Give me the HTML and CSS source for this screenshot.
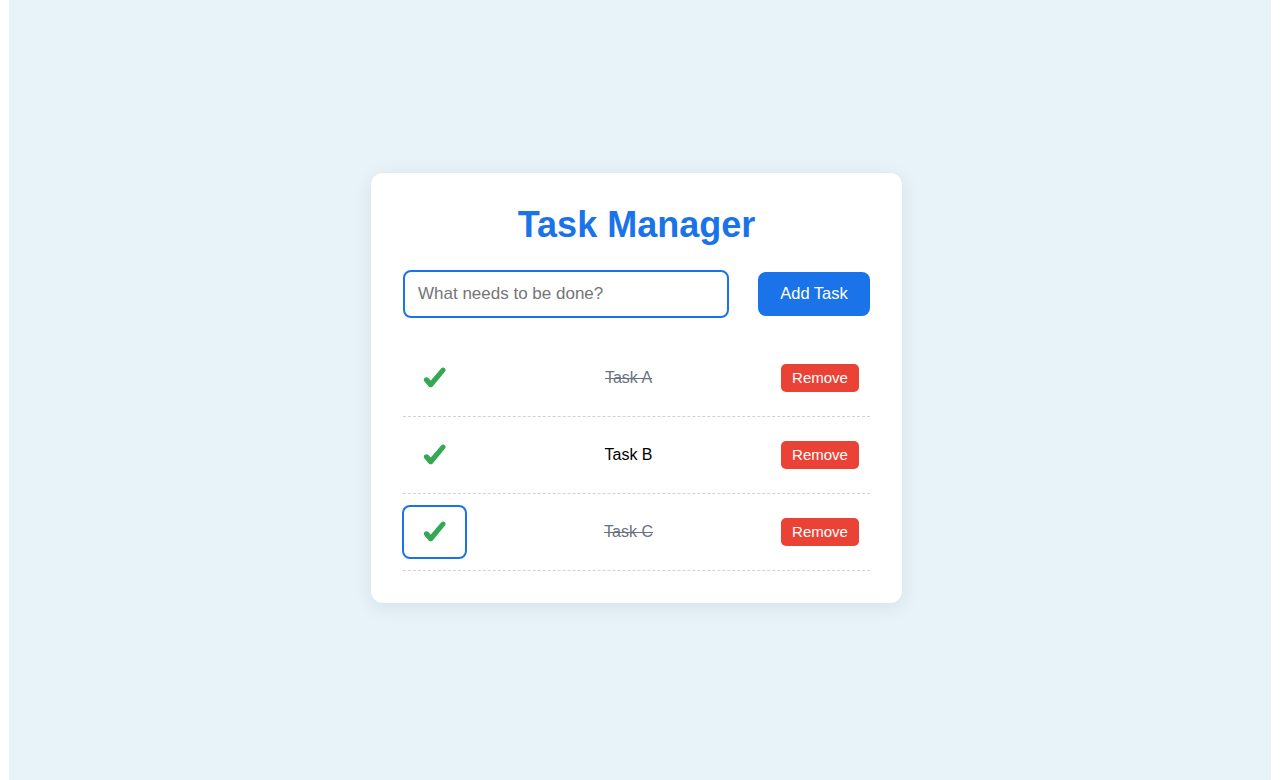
FILE: index.html
```html
<!DOCTYPE html>
<html lang="en">
<head>
<meta charset="utf-8">
<title>Task Manager</title>
<link rel="stylesheet" href="styles.css">
</head>
<body>
<main class="card">
  <h1 class="title">Task Manager</h1>
  <div class="add-row">
    <input class="task-input" type="text" placeholder="What needs to be done?">
    <button class="add-btn" type="button">Add Task</button>
  </div>
  <ul class="task-list">
    <li class="task">
      <button class="check-btn" type="button" aria-label="Toggle">
        <svg class="check" viewBox="0 0 21 19" width="21" height="19"><path d="M1,10.5 C0.3,11.2 0.3,12.3 1,13 L5.2,18 C6,18.9 7.4,18.9 8.2,18 L20.5,3.2 C21.3,2.2 21,0.8 19.9,0.3 C19,0 18.2,0.3 17.6,1 L6.7,13.6 L4.2,10.6 C3.4,9.7 1.9,9.7 1,10.5 Z"/></svg>
      </button>
      <span class="task-text done">Task A</span>
      <button class="remove-btn" type="button">Remove</button>
    </li>
    <li class="task">
      <button class="check-btn" type="button" aria-label="Toggle">
        <svg class="check" viewBox="0 0 21 19" width="21" height="19"><path d="M1,10.5 C0.3,11.2 0.3,12.3 1,13 L5.2,18 C6,18.9 7.4,18.9 8.2,18 L20.5,3.2 C21.3,2.2 21,0.8 19.9,0.3 C19,0 18.2,0.3 17.6,1 L6.7,13.6 L4.2,10.6 C3.4,9.7 1.9,9.7 1,10.5 Z"/></svg>
      </button>
      <span class="task-text">Task B</span>
      <button class="remove-btn" type="button">Remove</button>
    </li>
    <li class="task">
      <button class="check-btn focused" type="button" aria-label="Toggle">
        <svg class="check" viewBox="0 0 21 19" width="21" height="19"><path d="M1,10.5 C0.3,11.2 0.3,12.3 1,13 L5.2,18 C6,18.9 7.4,18.9 8.2,18 L20.5,3.2 C21.3,2.2 21,0.8 19.9,0.3 C19,0 18.2,0.3 17.6,1 L6.7,13.6 L4.2,10.6 C3.4,9.7 1.9,9.7 1,10.5 Z"/></svg>
      </button>
      <span class="task-text done">Task C</span>
      <button class="remove-btn" type="button">Remove</button>
    </li>
  </ul>
</main>
</body>
</html>
```
FILE: styles.css
```css
html {
  background: #ffffff;
}

* {
  box-sizing: border-box;
}

body {
  margin: 0 9px;
  min-height: 100vh;
  background: #e8f3f9;
  display: flex;
  align-items: center;
  justify-content: center;
  padding: 0 7px 5px 0;
  font-family: "Liberation Sans", Arial, Helvetica, sans-serif;
  color: #000;
}

.card {
  width: 531px;
  background: #ffffff;
  border-radius: 12px;
  padding: 32px;
  box-shadow: 0 4px 20px rgba(0, 0, 0, 0.08);
}

.title {
  margin: 0 0 25px;
  font-size: 36px;
  line-height: 40px;
  font-weight: 700;
  color: #1a73e8;
  text-align: center;
}

.add-row {
  display: flex;
  align-items: center;
  justify-content: space-between;
}

.task-input {
  width: 326px;
  height: 48px;
  border: 2px solid #1a73e8;
  border-radius: 8px;
  padding: 0 13px;
  font-family: inherit;
  font-size: 17px;
  color: #000;
  outline: none;
}

.task-input::placeholder {
  color: #757575;
}

.add-btn {
  width: 112px;
  height: 44px;
  border: none;
  border-radius: 8px;
  background: #1a73e8;
  color: #ffffff;
  font-family: inherit;
  font-size: 16.5px;
  cursor: pointer;
}

.task-list {
  list-style: none;
  margin: 22px 0 0;
  padding: 0;
}

.task {
  display: flex;
  align-items: center;
  padding: 11px 11px 11px 0;
  border-bottom: 1px dashed #d3d3d3;
}

.check-btn {
  width: 65px;
  height: 54px;
  margin-left: -1px;
  display: flex;
  align-items: center;
  justify-content: center;
  background: transparent;
  border: 2px solid transparent;
  border-radius: 8px;
  padding: 0;
  cursor: pointer;
}

.check-btn.focused {
  border-color: #1a73e8;
}

.check {
  display: block;
  overflow: visible;
  fill: #34a853;
  stroke: #34a853;
  stroke-width: 1.3;
  stroke-linejoin: round;
}

.task-text {
  flex: 1;
  margin-left: 9px;
  text-align: center;
  font-size: 16px;
  color: #000;
}

.task-text.done {
  color: #6b7280;
  text-decoration: line-through;
}

.remove-btn {
  width: 78px;
  height: 28px;
  border: none;
  border-radius: 5px;
  background: #ea4335;
  color: #ffffff;
  font-family: inherit;
  font-size: 15px;
  padding: 0;
  cursor: pointer;
}
```
